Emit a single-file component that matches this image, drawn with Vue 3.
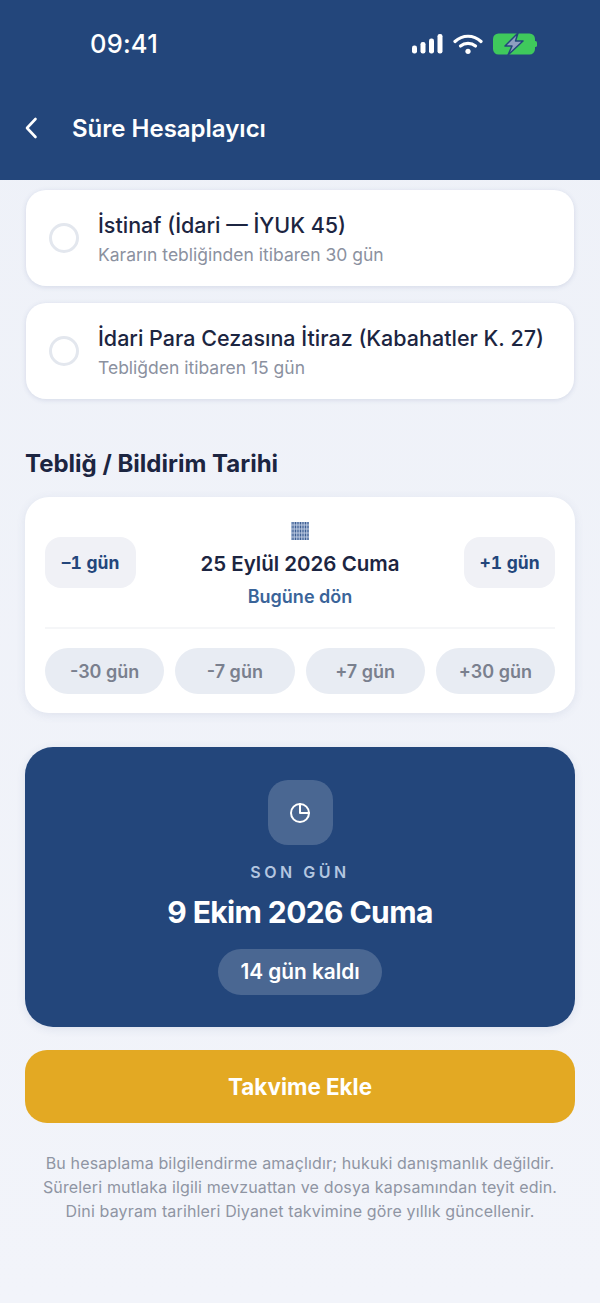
<template>
  <div class="page">
    <header class="topbar">
      <div class="status">
        <span class="time">09:41</span>
        <div class="status-icons">
          <svg width="32" height="22" viewBox="0 0 32 22" fill="#fff">
            <rect x="1" y="12.5" width="5" height="8" rx="2.2" />
            <rect x="9.5" y="9" width="5" height="11.5" rx="2.2" />
            <rect x="18" y="5.5" width="5" height="15" rx="2.2" />
            <rect x="26.5" y="1" width="5" height="19.5" rx="2.2" />
          </svg>
          <svg width="30" height="22" viewBox="0 0 30 22" fill="none" stroke="#fff" stroke-width="3.2" stroke-linecap="round">
            <path d="M2 8.5C9.5 1.5 20.5 1.5 28 8.5" />
            <path d="M7.5 13C11.8 9.4 18.2 9.4 22.5 13" />
            <circle cx="15" cy="18.3" r="2.6" fill="#fff" stroke="none" />
          </svg>
          <svg class="battery" width="44" height="24" viewBox="0 0 44 24">
            <rect x="0" y="1.5" width="42" height="21" rx="5.5" fill="#3fc95c" />
            <path d="M42 9h.4a1.6 1.6 0 0 1 1.6 1.6v2.8a1.6 1.6 0 0 1-1.6 1.6H42z" fill="#3fc95c" />
            <path d="M25 1 12 14h7l-4 9 15-14h-7.5z" fill="#8e9fc0" stroke="#23467b" stroke-width="1.5" stroke-linejoin="round" />
          </svg>
        </div>
      </div>
      <div class="nav">
        <svg class="back" width="14" height="24" viewBox="0 0 14 24" fill="none" stroke="#fff" stroke-width="2.6" stroke-linecap="round" stroke-linejoin="round">
          <path d="M11.5 3 3 12l8.5 9" />
        </svg>
        <h1>Süre Hesaplayıcı</h1>
      </div>
    </header>

    <main class="content">
      <div class="options">
        <div v-for="opt in options" :key="opt.title" class="option">
          <span class="radio"></span>
          <div>
            <div class="option-title">{{ opt.title }}</div>
            <div class="option-sub">{{ opt.sub }}</div>
          </div>
        </div>
      </div>

      <h2 class="section-title">Tebliğ / Bildirim Tarihi</h2>

      <section class="date-card">
        <div class="date-row">
          <button class="step">–1 gün</button>
          <div class="date-center">
            <svg class="cal" width="20" height="20" viewBox="0 0 20 20">
              <rect x="1" y="1" width="18" height="18" fill="#9db2d2" />
              <path d="M3 1v18M5.5 1v18M8 1v18M10.5 1v18M13 1v18M15.5 1v18M18 1v18" stroke="#3f5f92" stroke-width="1.1" />
              <path d="M1 4h18M1 8h18M1 12h18M1 16h18" stroke="#c7d3e6" stroke-width="0.9" />
            </svg>
            <div class="date-text">25 Eylül 2026 Cuma</div>
            <a class="today">Bugüne dön</a>
          </div>
          <button class="step">+1 gün</button>
        </div>
        <div class="quick">
          <button v-for="q in quick" :key="q" class="pill">{{ q }}</button>
        </div>
      </section>

      <section class="result">
        <div class="result-icon">
          <svg width="22" height="22" viewBox="0 0 22 22" fill="none" stroke="#fff" stroke-width="2" stroke-linecap="round" stroke-linejoin="round">
            <circle cx="11" cy="11" r="9" />
            <path d="M11 2v9h9" />
          </svg>
        </div>
        <div class="result-label">SON GÜN</div>
        <div class="result-date">9 Ekim 2026 Cuma</div>
        <div class="result-left">14 gün kaldı</div>
      </section>

      <button class="add">Takvime Ekle</button>

      <p class="note">
        Bu hesaplama bilgilendirme amaçlıdır; hukuki danışmanlık değildir.<br />
        Süreleri mutlaka ilgili mevzuattan ve dosya kapsamından teyit edin.<br />
        Dini bayram tarihleri Diyanet takvimine göre yıllık güncellenir.
      </p>
    </main>
  </div>
</template>

<script setup>
const options = [
  { title: 'İstinaf (İdari — İYUK 45)', sub: 'Kararın tebliğinden itibaren 30 gün' },
  { title: 'İdari Para Cezasına İtiraz (Kabahatler K. 27)', sub: 'Tebliğden itibaren 15 gün' },
];

const quick = ['-30 gün', '-7 gün', '+7 gün', '+30 gün'];
</script>

<style>
body {
  background: #f0f3f9;
}
</style>

<style scoped>
.page {
  width: 600px;
  height: 1303px;
  overflow: hidden;
  background: linear-gradient(#eef1f8, #f2f4fa);
  font-family: Inter, "Noto Sans", sans-serif;
}

.topbar {
  height: 180px;
  background: #23467b;
  color: #fff;
  box-sizing: border-box;
  padding-top: 27px;
}

.status {
  display: flex;
  justify-content: space-between;
  align-items: center;
  height: 34px;
  padding: 0 63px 0 90px;
}

.time {
  font-size: 25.5px;
  line-height: 32px;
  font-weight: 500;
  letter-spacing: 0.2px;
}

.status-icons {
  display: flex;
  align-items: center;
  gap: 10px;
}

.battery {
  flex: none;
}

.nav {
  display: flex;
  align-items: center;
  margin-top: 34px;
  padding-left: 24px;
  height: 66px;
}

.back {
  margin-right: 34px;
}

.nav h1 {
  margin: 0;
  font-size: 24px;
  font-weight: 600;
}

.content {
  padding: 10px 25px 0;
}

.options {
  display: flex;
  flex-direction: column;
  gap: 17px;
  padding: 0 1px;
}

.option {
  display: flex;
  align-items: center;
  height: 96px;
  box-sizing: border-box;
  padding: 0 16px 0 23px;
  gap: 19px;
  background: #fff;
  border-radius: 20px;
  box-shadow: 0 1px 5px rgba(70, 90, 140, 0.16);
}

.radio {
  flex: none;
  width: 30px;
  height: 30px;
  box-sizing: border-box;
  border: 3px solid #e3e7ee;
  border-radius: 50%;
}

.option-title {
  font-size: 21.5px;
  font-weight: 500;
  line-height: 30px;
  color: #1c2541;
  white-space: nowrap;
}

.option-sub {
  font-size: 17.5px;
  line-height: 24px;
  margin-top: 3px;
  color: #8b919f;
  white-space: nowrap;
}

.section-title {
  margin: 48px 0 16px;
  font-size: 24px;
  line-height: 34px;
  font-weight: 700;
  color: #1c2541;
}

.date-card {
  height: 216px;
  box-sizing: border-box;
  padding: 20px 20px 0;
  background: #fff;
  border-radius: 24px;
  box-shadow: 0 2px 10px rgba(70, 90, 140, 0.1);
}

.date-row {
  display: flex;
  justify-content: space-between;
  height: 110px;
  border-bottom: 2px solid #f5f6f8;
}

button {
  font-family: inherit;
  border: none;
  padding: 0;
}

.step {
  width: 91px;
  height: 51px;
  margin-top: 20px;
  background: #f0f1f6;
  border-radius: 16px;
  font-size: 17.5px;
  font-weight: 700;
  font-variant-numeric: tabular-nums;
  color: #23467b;
}

.date-center {
  display: flex;
  flex-direction: column;
  align-items: center;
}

.cal {
  margin-top: 4px;
}

.date-text {
  margin-top: 9px;
  font-size: 20.5px;
  line-height: 28px;
  font-weight: 600;
  color: #1c2541;
}

.today {
  margin-top: 7px;
  font-size: 18px;
  line-height: 24px;
  font-weight: 600;
  color: #3a6499;
}

.quick {
  display: grid;
  grid-template-columns: repeat(4, 1fr);
  gap: 11px;
  margin-top: 19px;
}

.pill {
  height: 46px;
  background: #e8ecf3;
  border-radius: 23px;
  font-size: 18px;
  font-weight: 600;
  color: #7a808e;
}

.result {
  height: 280px;
  margin-top: 34px;
  box-sizing: border-box;
  padding-top: 33px;
  display: flex;
  flex-direction: column;
  align-items: center;
  background: #23467b;
  border-radius: 28px;
  box-shadow: 0 2px 10px rgba(35, 70, 123, 0.1);
  color: #fff;
}

.result-icon {
  display: flex;
  align-items: center;
  justify-content: center;
  width: 65px;
  height: 65px;
  background: rgba(255, 255, 255, 0.18);
  border-radius: 20px;
}

.result-label {
  margin-top: 15px;
  font-size: 16px;
  line-height: 24px;
  font-weight: 600;
  letter-spacing: 3.5px;
  color: #b4c6e0;
}

.result-date {
  margin-top: 8px;
  font-size: 30px;
  line-height: 40px;
  font-weight: 700;
  letter-spacing: -0.6px;
}

.result-left {
  margin-top: 17px;
  height: 46px;
  line-height: 46px;
  padding: 0 22px;
  background: rgba(255, 255, 255, 0.18);
  border-radius: 23px;
  font-size: 20.8px;
  font-weight: 600;
}

.add {
  display: block;
  width: 100%;
  height: 73px;
  margin-top: 23px;
  background: #e3a923;
  border-radius: 22px;
  color: #fff;
  font-size: 22.4px;
  font-weight: 700;
}

.note {
  margin: 28px 0 0;
  text-align: center;
  font-size: 16px;
  line-height: 24px;
  letter-spacing: 0.15px;
  color: #8f95a3;
}
</style>
